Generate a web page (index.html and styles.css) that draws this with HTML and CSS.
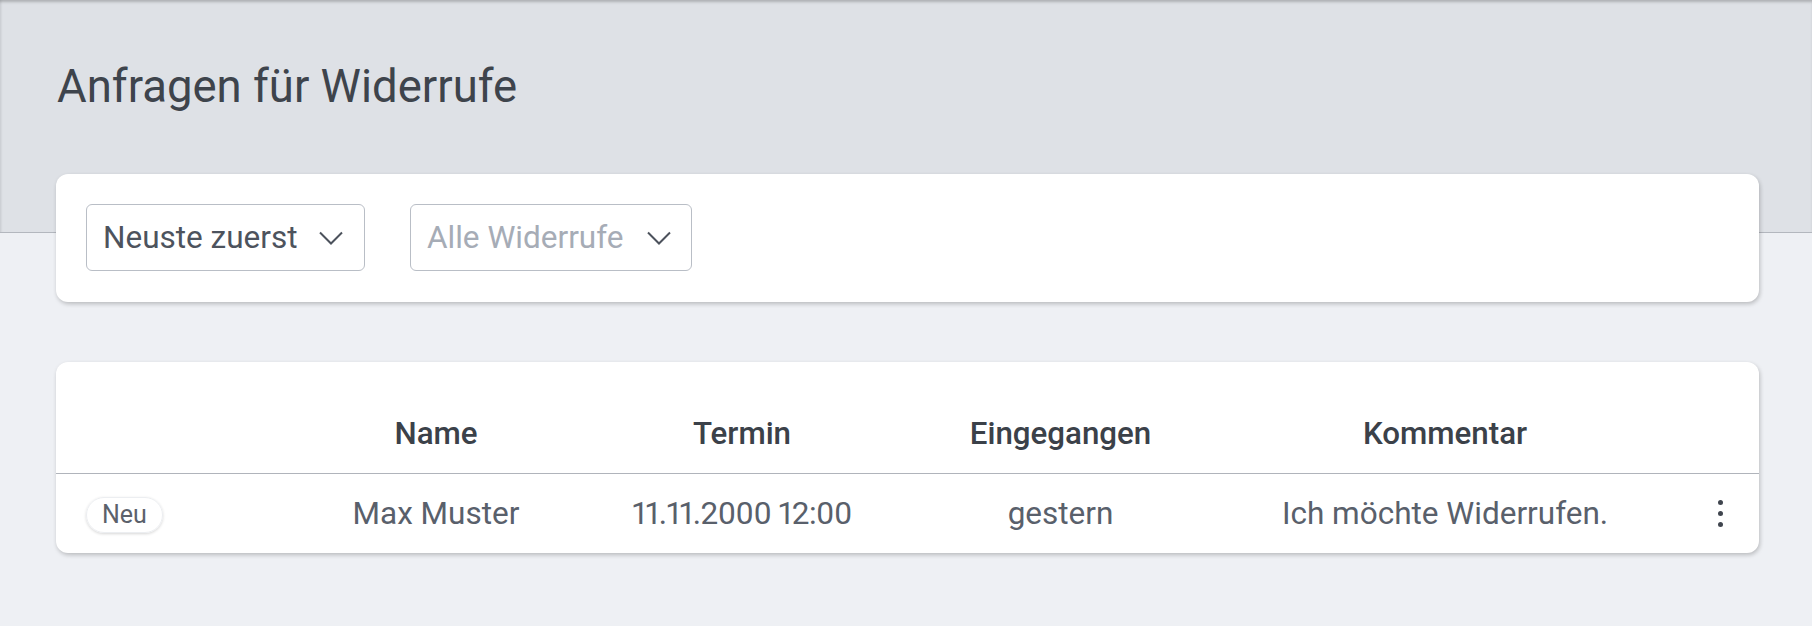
FILE: index.html
```html
<!DOCTYPE html>
<html lang="de">
<head>
<meta charset="utf-8">
<title>Anfragen für Widerrufe</title>
<link rel="stylesheet" href="styles.css">
</head>
<body>
<header class="page-header">
  <h1 class="page-title">Anfragen für Widerrufe</h1>
</header>
<main class="main">
  <section class="card filter-card">
    <div class="select">
      <span class="select-value">Neuste zuerst</span>
      <svg class="chevron" width="24" height="14" viewBox="0 0 24 14"><path d="M1 1.5 L12 12.5 L23 1.5" fill="none" stroke="#4c525c" stroke-width="2"/></svg>
    </div>
    <div class="select select-wide">
      <span class="select-value placeholder">Alle Widerrufe</span>
      <svg class="chevron" width="24" height="14" viewBox="0 0 24 14"><path d="M1 1.5 L12 12.5 L23 1.5" fill="none" stroke="#4c525c" stroke-width="2"/></svg>
    </div>
  </section>

  <section class="card table-card">
    <div class="row head-row">
      <div class="cell"></div>
      <div class="cell">Name</div>
      <div class="cell">Termin</div>
      <div class="cell">Eingegangen</div>
      <div class="cell">Kommentar</div>
      <div class="cell"></div>
    </div>
    <div class="row body-row">
      <div class="cell cell-badge"><span class="badge">Neu</span></div>
      <div class="cell">Max Muster</div>
      <div class="cell cell-date">11.11.2000 12:00</div>
      <div class="cell">gestern</div>
      <div class="cell">Ich möchte Widerrufen.</div>
      <div class="cell cell-actions">
        <span class="kebab"><i></i><i></i><i></i></span>
      </div>
    </div>
  </section>
</main>
</body>
</html>
```

FILE: styles.css
```css
html, body {
  margin: 0;
  padding: 0;
}

body {
  background: #eef0f4;
  font-family: Roboto, "Liberation Sans", Arial, sans-serif;
  color: #3e444c;
  min-height: 626px;
}

.page-header {
  height: 232px;
  box-sizing: content-box;
  background: #dee1e6;
  border-bottom: 1px solid #b3b7be;
  padding-left: 57px;
  box-shadow: inset 0 3px 3px -1px rgba(0, 0, 0, 0.22), inset 3px 0 3px -2px rgba(0, 0, 0, 0.08);
  overflow: hidden;
}

.page-title {
  margin: 0;
  padding-top: 59px;
  font-size: 45.5px;
  line-height: 56px;
  font-weight: 400;
  color: #3e444c;
}

.main {
  padding: 0 53px 0 56px;
  margin-top: -59px;
}

.card {
  background: #ffffff;
  border-radius: 12px;
  box-shadow: 1px 2px 4px rgba(0, 0, 0, 0.22);
}

.filter-card {
  display: flex;
  gap: 45px;
  padding: 30px 30px 31px;
}

.select {
  box-sizing: border-box;
  width: 279px;
  height: 67px;
  display: flex;
  align-items: center;
  justify-content: space-between;
  border: 1px solid #b9bec6;
  border-radius: 6px;
  padding: 0 21px 0 16px;
}

.select-wide {
  width: 282px;
  padding-right: 20px;
}

.select-value {
  font-size: 31.5px;
  line-height: 36px;
  color: #4d535d;
  white-space: nowrap;
}

.select-value.placeholder {
  color: #a6acb6;
}

.chevron {
  display: block;
  flex: none;
}

.table-card {
  margin-top: 60px;
}

.row {
  display: grid;
  grid-template-columns: 244px 272px 340px 297px 472px 1fr;
  align-items: center;
  text-align: center;
}

.head-row {
  padding: 54px 0 21px;
  border-bottom: 1px solid #b0b4bb;
  font-size: 31.3px;
  line-height: 36px;
  font-weight: 500;
  color: #3b4149;
}

.body-row {
  height: 79px;
  font-size: 31.5px;
  line-height: 36px;
  color: #59606b;
  font-variant-numeric: proportional-nums;
}

.cell {
  white-space: nowrap;
}

.cell-date {
  letter-spacing: -0.5px;
}

.cell-badge {
  text-align: left;
  padding-left: 30px;
}

.badge {
  display: inline-flex;
  align-items: center;
  box-sizing: border-box;
  height: 36px;
  padding: 0 15px;
  border: 1px solid #eceef1;
  border-radius: 18px;
  box-shadow: 0 1px 3px rgba(0, 0, 0, 0.16);
  font-size: 25px;
  line-height: 28px;
  color: #5b616b;
}

.cell-actions {
  display: flex;
  justify-content: center;
}

.kebab {
  display: flex;
  flex-direction: column;
  gap: 6px;
  padding-left: 1px;
}

.kebab i {
  display: block;
  width: 5px;
  height: 5px;
  border-radius: 50%;
  background: #3f454e;
}
```
